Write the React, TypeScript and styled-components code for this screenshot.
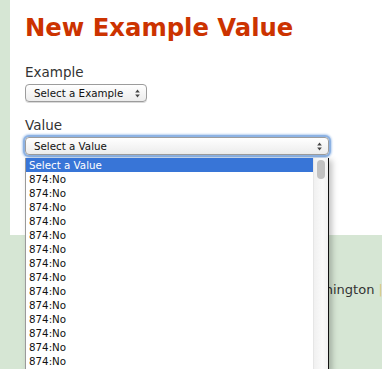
import React from "react";
import styled, { createGlobalStyle } from "styled-components";

const GlobalStyle = createGlobalStyle`
  html, body {
    margin: 0;
    padding: 0;
    background: #d6e6d4;
    overflow: hidden;
    font-family: "DejaVu Sans", Verdana, sans-serif;
  }
`;

const Page = styled.div`
  box-sizing: border-box;
  height: 100vh;
  padding-left: 10px;
`;

const Panel = styled.section`
  box-sizing: border-box;
  height: 235px;
  background: #ffffff;
  padding: 13px 15px 0;
`;

const Title = styled.h1`
  margin: 0;
  font-size: 24.3px;
  line-height: 30px;
  font-weight: bold;
  color: #cc3300;
`;

const Field = styled.div<{ $gap: number }>`
  position: relative;
  margin-top: ${(p) => p.$gap}px;
`;

const Label = styled.label`
  display: block;
  font-size: 13.5px;
  line-height: 17px;
  color: #333333;
  margin-bottom: 3px;
`;

const SelectBox = styled.div<{ $width: number; $focused?: boolean }>`
  box-sizing: border-box;
  width: ${(p) => p.$width}px;
  height: 18px;
  display: flex;
  align-items: center;
  justify-content: space-between;
  padding: 0 6px 0 8px;
  border: 1px solid #9c9c9c;
  border-radius: 4px;
  background: linear-gradient(#ffffff, #ececec);
  font-size: 10.3px;
  color: #111111;
  box-shadow: ${(p) =>
    p.$focused ? "0 0 0 2px #8db2e3, 0 0 2px 3px #b9d1f0" : "0 1px 0 #dadada"};
`;

const Arrows = () => (
  <svg width="5" height="9" viewBox="0 0 5 9">
    <path d="M2.5 0.5 L4.8 3.5 L0.2 3.5 Z" fill="#444" />
    <path d="M2.5 8.5 L4.8 5.5 L0.2 5.5 Z" fill="#444" />
  </svg>
);

const ListBox = styled.div`
  position: absolute;
  top: calc(100% + 3px);
  left: 0;
  box-sizing: border-box;
  width: 304px;
  height: 214px;
  overflow: hidden;
  display: flex;
  background: #ffffff;
  border-left: 1px solid #9a9a9a;
  border-right: 1px solid #111111;
  box-shadow: 3px 2px 6px rgba(0, 0, 0, 0.25);
  z-index: 2;
`;

const Options = styled.ul`
  flex: 1;
  margin: 0;
  padding: 0;
  list-style: none;
`;

const Option = styled.li<{ $selected?: boolean }>`
  height: 14px;
  line-height: 14px;
  padding-left: 3px;
  font-size: 10.3px;
  color: ${(p) => (p.$selected ? "#ffffff" : "#111111")};
  background: ${(p) => (p.$selected ? "#3875d7" : "transparent")};
`;

const ScrollTrack = styled.div`
  width: 15px;
  background: linear-gradient(90deg, #f0f0f0, #fafafa 60%, #f2f2f2);
  border-left: 1px solid #e6e6e6;
  padding-top: 2px;
  box-sizing: border-box;
`;

const ScrollThumb = styled.div`
  width: 8px;
  height: 19px;
  margin-left: 3px;
  border-radius: 4px;
  background: #c2c2c2;
`;

const Footer = styled.footer`
  padding: 47px 0 0 288px;
  font-size: 13px;
  line-height: 15px;
  color: #333333;
  white-space: nowrap;
  overflow: hidden;
`;

const FooterLink = styled.span`
  color: #d8c884;
`;

const values = Array.from({ length: 14 }, () => "874:No");

export default function App() {
  return (
    <Page>
      <GlobalStyle />
      <Panel>
        <Title>New Example Value</Title>
        <Field $gap={21}>
          <Label>Example</Label>
          <SelectBox $width={122}>
            <span>Select a Example</span>
            <Arrows />
          </SelectBox>
        </Field>
        <Field $gap={15}>
          <Label>Value</Label>
          <SelectBox $width={304} $focused>
            <span>Select a Value</span>
            <Arrows />
          </SelectBox>
          <ListBox>
            <Options>
              <Option $selected>Select a Value</Option>
              {values.map((v, i) => (
                <Option key={i}>{v}</Option>
              ))}
            </Options>
            <ScrollTrack>
              <ScrollThumb />
            </ScrollTrack>
          </ListBox>
        </Field>
      </Panel>
      <Footer>
        Washington <FooterLink>|</FooterLink>
      </Footer>
    </Page>
  );
}
